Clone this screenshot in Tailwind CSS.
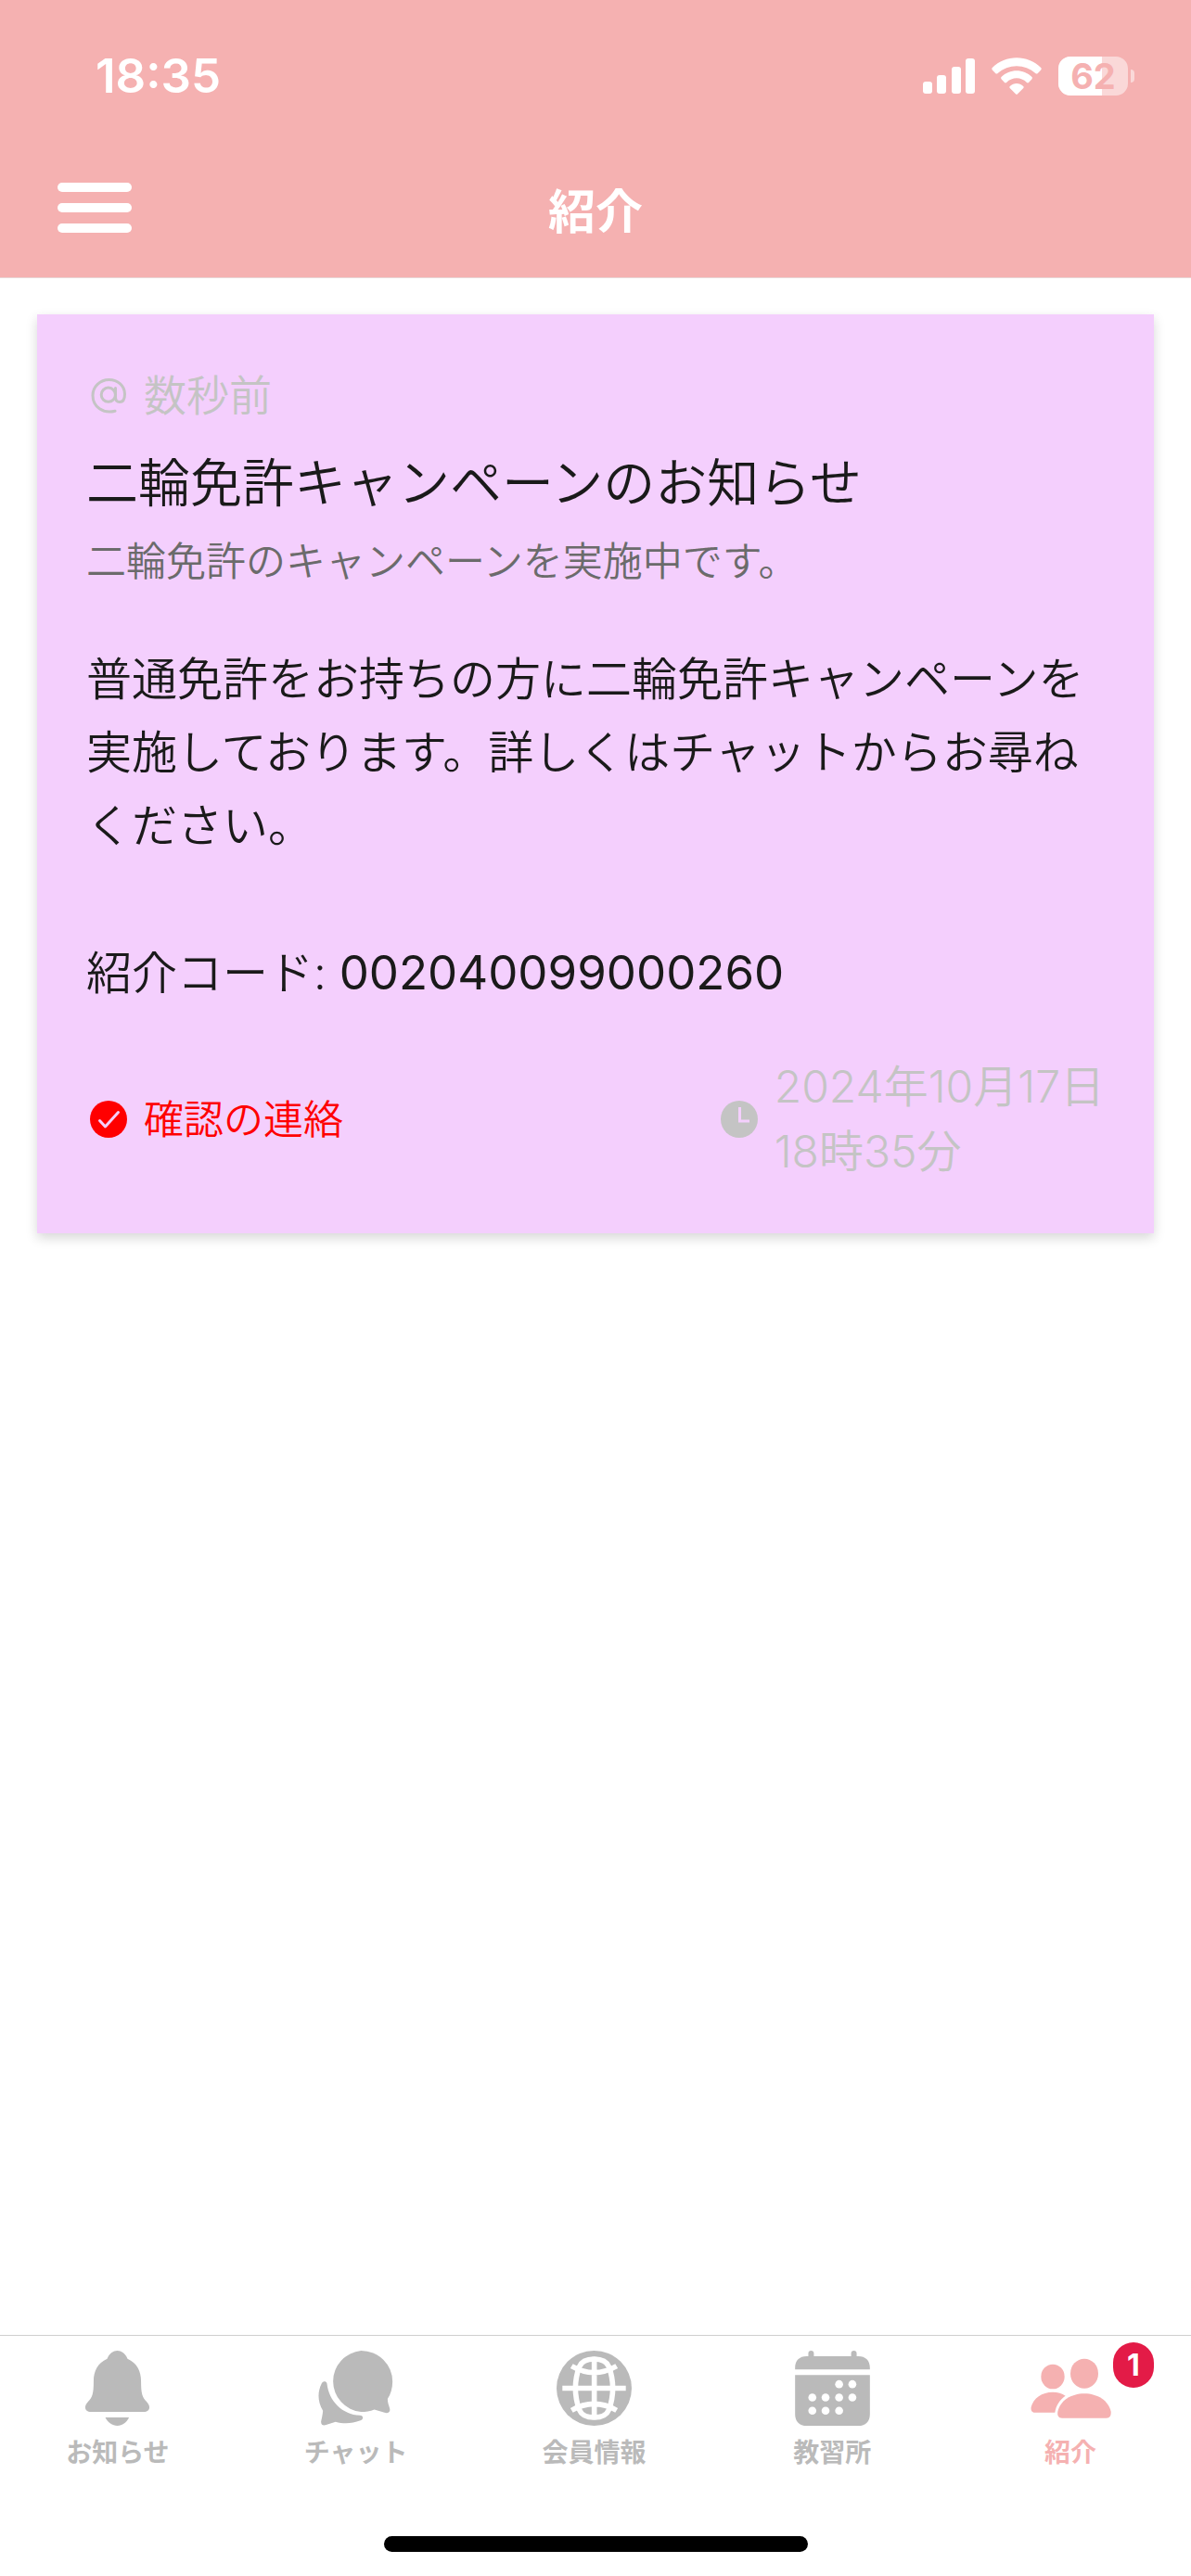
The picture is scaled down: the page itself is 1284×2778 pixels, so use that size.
<!DOCTYPE html>
<html lang="ja">
  <head>
    <meta charset="UTF-8" />
    <meta name="viewport" content="width=device-width, initial-scale=1.0" />
    <title>紹介</title>
    <script src="https://cdn.jsdelivr.net/npm/@tailwindcss/browser@4"></script>
  </head>

  <body
    class="min-h-screen flex flex-col bg-white text-[#1a1a1a] font-[Inter,'Noto_Sans_CJK_JP',sans-serif]"
  >
    <header class="bg-[#f5b1b1] text-white border-b border-[#e8d5d5]">
      <!-- Status bar -->
      <div class="flex justify-between items-center h-[152px] pt-3 pl-[103px] pr-[61px]">
        <span class="text-[51px] leading-[60px] font-semibold">18:35</span>
        <div class="flex items-center gap-[18px]">
          <svg class="w-14 h-[38px]" viewBox="0 0 56 38" fill="currentColor" aria-hidden="true">
            <rect x="0" y="25" width="10" height="13" rx="3" />
            <rect x="15" y="18" width="10" height="20" rx="3" />
            <rect x="31" y="9" width="10" height="29" rx="3" />
            <rect x="46" y="0" width="10" height="38" rx="3" />
          </svg>
          <svg class="w-[54px] h-10" viewBox="0 0 54 40" fill="currentColor" aria-hidden="true">
            <path d="M.8 11C15-3.5 39-3.5 53.200 11q1 1.200 0 2.400l-3.600 3.800q-1 .8-2 0C36 6.500 18 6.500 6.400 17.200q-1 .8-2 0L.8 13.400q-1-1.200 0-2.400Z" />
            <path d="M10.500 21C19.500 12 34.500 12 43.500 21q.9 1.100 0 2.200l-3.500 3.800q-1 .8-2 0C31.500 20.800 22.500 20.800 16 27q-1 .8-2 0l-3.500-3.800q-.9-1.100 0-2.200Z" />
            <path d="M19.800 31c4-4 10.400-4 14.400 0q.9 1 .1 2l-6.200 6.300q-1.100 1-2.200 0L19.700 33q-.8-1 .1-2Z" />
          </svg>
          <div class="flex items-center gap-[3px]">
            <div class="relative w-[75px] h-[42px] rounded-[13px] bg-white/50">
              <div class="h-full rounded-l-[13px] bg-white" style="width: 62%"></div>
              <span class="absolute inset-x-0 -top-1 text-center text-[38px] leading-[50px] font-bold text-[#f5b1b1]">62</span>
            </div>
            <div class="w-1 h-[14px] rounded-r-full bg-white/50"></div>
          </div>
        </div>
      </div>

      <!-- Title bar -->
      <div class="grid grid-cols-3 items-start h-[147px] px-[62px] pt-[45px]">
        <button type="button" aria-label="メニュー" class="flex flex-col gap-3 w-20">
          <span class="h-[10px] w-full rounded-full bg-white"></span>
          <span class="h-[10px] w-full rounded-full bg-white"></span>
          <span class="h-[10px] w-full rounded-full bg-white"></span>
        </button>
        <h1 class="text-center text-[51px] leading-[64px] font-bold">紹介</h1>
      </div>
    </header>

    <main class="flex-1 px-10 pt-[39px]">
      <article
        class="px-[53px] pt-[54px] pb-[53px] bg-[#f4cffd] font-[350] shadow-[0_5px_12px_rgba(0,0,0,0.16)]"
      >
        <div class="flex items-center gap-[18px] text-[46px] leading-[66px] text-[#c4c4c4]">
          <svg class="ml-1 w-10 h-10" viewBox="-1.5 -2 40 40" fill="none" stroke="currentColor" stroke-width="3" stroke-linecap="round" aria-hidden="true">
            <path d="M25.500 35.200C13 38.500 1.500 31 1.500 18.500 1.500 9 9.500 1.500 19 1.500 28.500 1.500 36 8 36 17c0 5.500-2 8.500-5.500 8.500-3 0-4.500-2-4.500-5V10.500" />
            <circle cx="18.300" cy="17.700" r="7.600" />
          </svg>
          <span>数秒前</span>
        </div>
        <h2 class="mt-6 text-[56px] leading-[76px]">二輪免許キャンペーンのお知らせ</h2>
        <p class="mt-4 text-[43px] leading-[60px] text-[#6b6b6b]">
          二輪免許のキャンペーンを実施中です。
        </p>

        <div class="mt-[58px] text-[49px] leading-[79px]">
          <p>
            普通免許をお持ちの方に二輪免許キャンペーンを実施しております。詳しくはチャットからお尋ねください。
          </p>
          <p class="mt-[79px]">紹介コード: <span class="text-[51px] font-normal">002040099000260</span></p>
        </div>

        <div class="mt-12 flex justify-between items-center">
          <div class="flex items-center gap-[18px] text-[43px] leading-[70px] text-[#ff0000]">
            <svg class="ml-1 w-10 h-10" viewBox="0 0 40 40" aria-hidden="true">
              <circle cx="20" cy="20" r="20" fill="currentColor" />
              <path d="M10.500 21.500L16.500 28 30.500 12.500" fill="none" stroke="#f4cffd" stroke-width="3" stroke-linecap="round" stroke-linejoin="round" />
            </svg>
            <span>確認の連絡</span>
          </div>
          <div class="flex items-center gap-[18px] text-[48px] leading-[70px] text-[#c4c4c4]">
            <svg class="w-10 h-10" viewBox="0 0 40 40" aria-hidden="true">
              <circle cx="20" cy="20" r="20" fill="currentColor" />
              <path d="M20.500 7V22H31" fill="none" stroke="#f4cffd" stroke-width="3" />
            </svg>
            <time datetime="2024-10-17T18:35">2024年10月17日<br />18時35分</time>
          </div>
        </div>
      </article>
    </main>

    <!-- Tab bar -->
    <footer class="border-t border-[#cfcfcf]">
      <nav>
        <ul class="grid grid-cols-5 text-[28px] leading-10 font-semibold text-[#bababa]">
          <li>
            <a href="#" class="flex flex-col items-center gap-[9px] pt-4 pr-[3px]">
              <svg class="w-[81px] h-[81px]" viewBox="260 106 244 244" fill="currentColor" aria-hidden="true">
                <path d="M382 106c15 0 27 11 33 26C446 146 459 172 459 205c0 42 4 52 18 67 17 18 8 33-9 33H296c-17 0-26-15-9-33 14-15 18-25 18-67 0-33 13-59 44-73 6-15 18-26 33-26Z" />
                <path d="M343 323h77c-8 17-22 27-38 27s-31-10-39-27Z" />
              </svg>
              <span>お知らせ</span>
            </a>
          </li>
          <li>
            <a href="#" class="flex flex-col items-center gap-[9px] pt-4 pr-[3px]">
              <svg class="w-[81px] h-[81px]" viewBox="1031 106 243 244" fill="currentColor" aria-hidden="true">
                <path d="M1170 106A102 100 0 0 1 1272 206C1272 228 1266 247 1256 263 1256 275 1260 284 1263 294 1266 305 1257 311 1246 307L1213 297C1199 303 1185 305 1170 305A101 100 0 0 1 1170 106Z" />
                <path d="M1059 212C1056 204 1047 204 1042 212 1028 240 1028 270 1046 301 1045 315 1042 325 1040 336 1039 346 1046 350 1054 348L1087 337C1115 345 1140 343 1168 333 1179 328 1178 317 1166 316 1110 314 1065 270 1059 212Z" />
              </svg>
              <span>チャット</span>
            </a>
          </li>
          <li>
            <a href="#" class="flex flex-col items-center gap-[9px] pt-4 pr-[3px]">
              <svg class="w-[81px] h-[81px]" viewBox="300 106 244 244" aria-hidden="true">
                <circle cx="422" cy="228" r="122" fill="currentColor" />
                <g fill="none" stroke="#fff" stroke-width="17">
                  <path d="M319 228H525M422.500 126V330M349 156Q422 198 495 156M349 300Q422 258 495 300" />
                  <path d="M422 133C442 133 462 138 470 158 487 205 487 251 470 298 462 318 442 323 422 323S382 318 374 298C357 251 357 205 374 158 382 138 402 133 422 133Z" />
                </g>
              </svg>
              <span>会員情報</span>
            </a>
          </li>
          <li>
            <a href="#" class="flex flex-col items-center gap-[9px] pt-4 pr-[3px]">
              <svg class="w-[81px] h-[81px]" viewBox="1071 106 243 244" fill="currentColor" aria-hidden="true">
                <path d="M1071 167V162C1071 138 1085 124 1109 124H1114V115A9 9 0 0 1 1132 115V124H1253V115A9 9 0 0 1 1271 115V124H1276C1300 124 1314 138 1314 162V167Z" />
                <path d="M1071 185H1314V312C1314 336 1300 350 1276 350H1109C1085 350 1071 336 1071 312Z" />
                <g fill="#fff">
                  <circle cx="1214" cy="215" r="13" />
                  <circle cx="1257" cy="215" r="13" />
                  <circle cx="1127" cy="258" r="13" />
                  <circle cx="1170" cy="258" r="13" />
                  <circle cx="1214" cy="258" r="13" />
                  <circle cx="1257" cy="258" r="13" />
                  <circle cx="1127" cy="301" r="13" />
                  <circle cx="1170" cy="301" r="13" />
                  <circle cx="1214" cy="301" r="13" />
                </g>
              </svg>
              <span>教習所</span>
            </a>
          </li>
          <li class="relative">
            <a href="#" aria-current="page" class="flex flex-col items-center gap-[9px] pt-4 pr-[3px] text-[#f5b1b1]">
              <svg class="w-[87px] h-[81px]" viewBox="332 106 261 243" fill="currentColor" aria-hidden="true">
                <ellipse cx="404" cy="190" rx="38" ry="40" />
                <ellipse cx="506" cy="180" rx="45" ry="48" />
                <path d="M346 306C336 306 332 298 334 288 341 260 369 240 404 240 420 240 434 244 445 252 425 266 415 283 411 306Z" />
                <path d="M434 324C422 324 418 315 420 303 428 268 463 245 506 245S584 268 592 303C593 315 589 324 577 324Z" />
              </svg>
              <span>紹介</span>
            </a>
            <span class="absolute right-10 top-[7px] w-11 h-[49px] rounded-full bg-[#e31b47] text-center text-[32px] leading-[49px] font-bold text-white">1</span>
          </li>
        </ul>
      </nav>
      <div class="mx-auto mt-[70px] mb-[26px] w-[457px] h-[17px] rounded-full bg-black"></div>
    </footer>
  </body>
</html>
